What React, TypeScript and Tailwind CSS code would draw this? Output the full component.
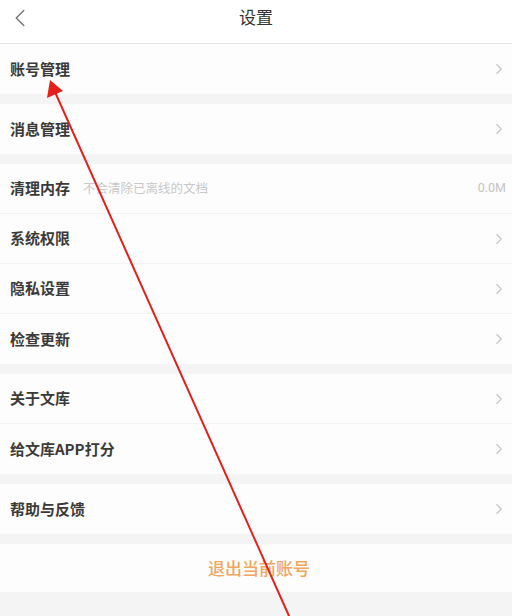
import { ChevronLeft, ChevronRight } from 'lucide-react';

type Row = { label: string; hint?: string; value?: string };

const groups: Row[][] = [
  [{ label: '账号管理' }],
  [{ label: '消息管理' }],
  [
    { label: '清理内存', hint: '不会清除已离线的文档', value: '0.0M' },
    { label: '系统权限' },
    { label: '隐私设置' },
    { label: '检查更新' },
  ],
  [{ label: '关于文库' }, { label: '给文库APP打分' }],
  [{ label: '帮助与反馈' }],
];

function SettingRow({ row, last }: { row: Row; last: boolean }) {
  return (
    <div
      className={`h-[50px] flex items-center pl-[10px] pr-[4px] bg-[#fdfdfd] ${
        last ? '' : 'border-b border-[#f3f3f3]'
      }`}
    >
      <span className="text-[15px] font-semibold text-[#3a3a3a]">{row.label}</span>
      {row.hint && <span className="ml-[13px] text-[12.5px] text-[#c8c8c8]">{row.hint}</span>}
      <div className="flex-1" />
      {row.value ? (
        <span className="text-[12.5px] text-[#c4c4c4] pr-[2px]" style={{ fontFamily: 'Roboto, sans-serif' }}>
          {row.value}
        </span>
      ) : (
        <ChevronRight size={18} strokeWidth={1.5} className="text-[#c6c6c6]" />
      )}
    </div>
  );
}

export default function App() {
  return (
    <div
      className="relative w-[512px] h-[616px] overflow-hidden bg-[#f4f4f4]"
      style={{ fontFamily: '"Noto Sans CJK SC", "Noto Sans", sans-serif' }}
    >
      <header className="h-[44px] bg-white border-b border-[#e6e6e6] relative flex items-center justify-center">
        <ChevronLeft size={30} strokeWidth={1.2} className="absolute left-[5px] top-[3px] text-[#777]" />
        <span className="text-[17px] text-[#333] -mt-[10px]">设置</span>
      </header>

      <div className="flex flex-col gap-[10px]">
        {groups.map((g, i) => (
          <div key={i} className="flex flex-col">
            {g.map((row, j) => (
              <SettingRow key={row.label} row={row} last={j === g.length - 1} />
            ))}
          </div>
        ))}
        <div className="h-[48px] bg-[#fdfdfd] flex items-center justify-center">
          <span className="text-[17px] font-medium text-[#f0a65c] ml-[6px]">退出当前账号</span>
        </div>
      </div>

      {/* red annotation arrow */}
      <svg className="absolute inset-0 pointer-events-none" width="512" height="616" viewBox="0 0 512 616">
        <line x1="289" y1="616" x2="55" y2="92" stroke="#e3201b" strokeWidth="2" strokeLinecap="round" />
        <polygon points="50,80 47,98 63,91" fill="#e3201b" />
      </svg>
    </div>
  );
}
